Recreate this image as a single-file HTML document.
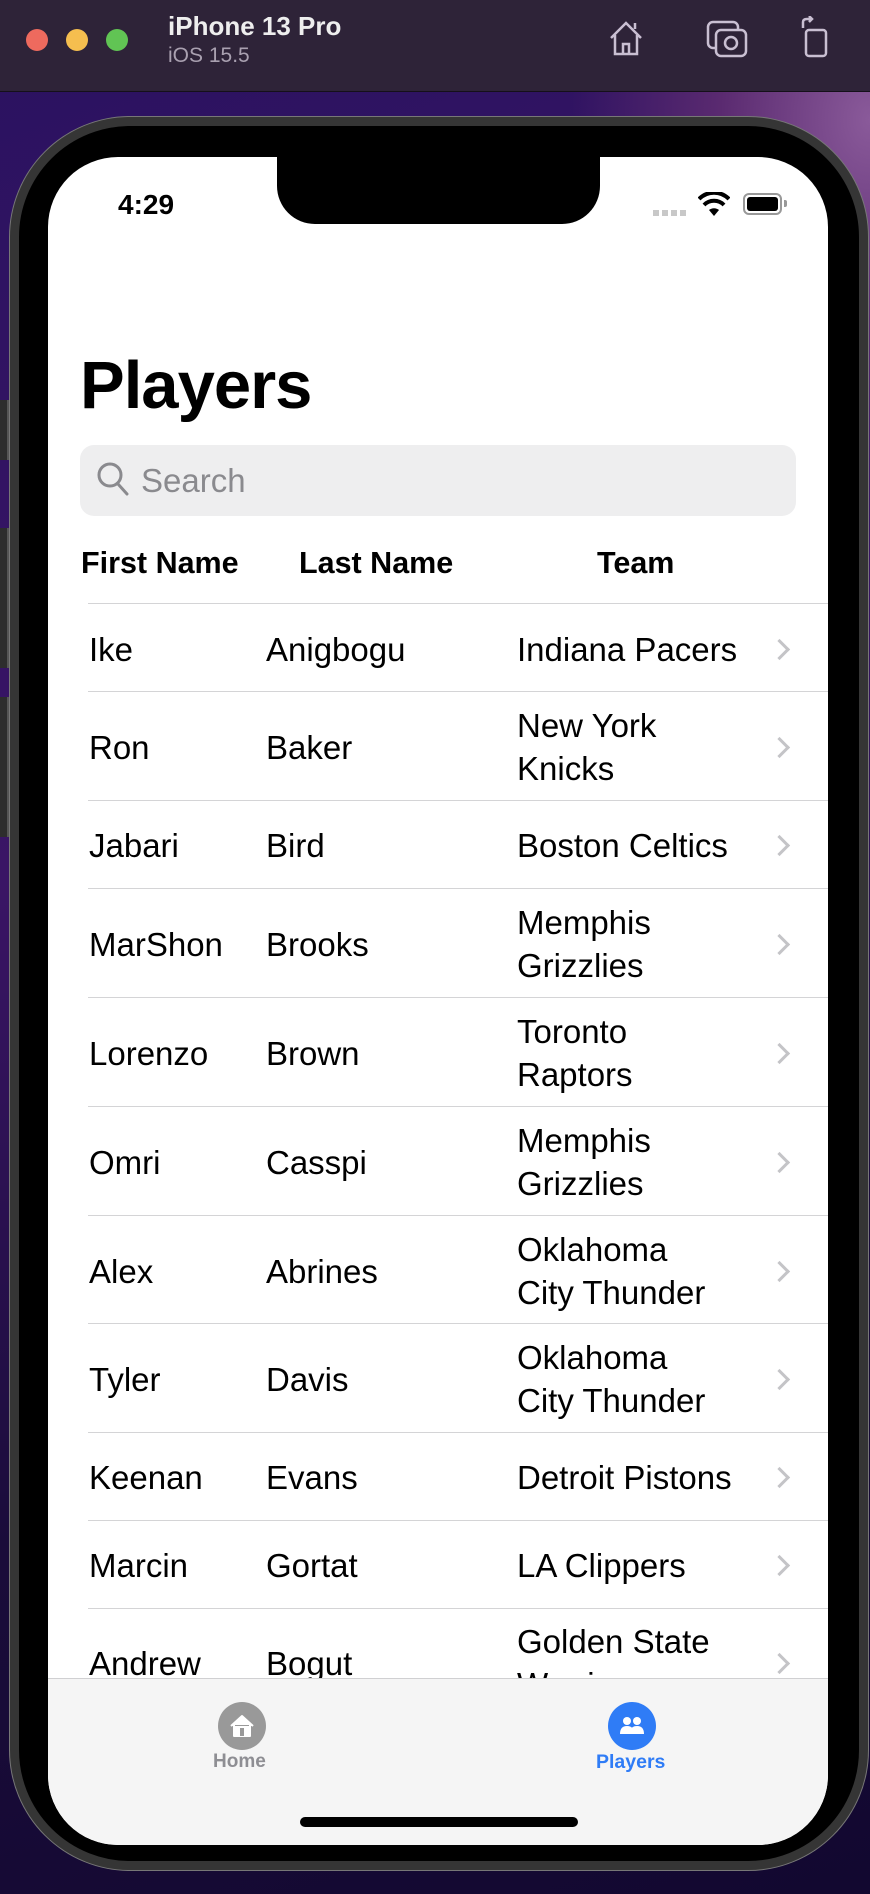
<!DOCTYPE html>
<html><head><meta charset="utf-8"><style>
*{margin:0;padding:0;box-sizing:border-box}
body{width:870px;height:1894px;overflow:hidden;position:relative;font-family:"Liberation Sans",Arial,sans-serif;background:radial-gradient(ellipse 300px 400px at 870px 120px,#8a5a9a 0%,#5a2a70 50%,transparent 100%),linear-gradient(160deg,#2a1260 0%,#3a1565 40%,#1a0c3a 70%,#120830 100%)}
.abs{position:absolute}
.tb{left:0;top:0;width:870px;height:92px;background:#2e2338;border-bottom:1px solid #15101a}
.dot{width:22px;height:22px;border-radius:50%;top:29px}
.frame{left:10px;top:117px;width:858px;height:1753px;border-radius:120px;background:#000;border:9px solid #353535;box-shadow:0 0 0 1px #777}
.screen{left:48px;top:157px;width:780px;height:1688px;border-radius:70px;background:#fff;overflow:hidden}
.notch{left:229px;top:-10px;width:323px;height:77px;background:#000;border-radius:0 0 38px 38px}
.t{position:absolute;font-size:33px;color:#000;white-space:nowrap;line-height:43px}
.sep{position:absolute;left:40px;right:0;height:1px;background:#d4d4d6}
.chev{position:absolute;left:724px;width:15px;height:15px;border-right:3px solid #c4c4c7;border-top:3px solid #c4c4c7;transform:rotate(45deg)}
.btn{left:0;width:9px;background:#2d2d2d;border-right:2px solid #555}
</style></head><body>
<div class="abs tb">
 <div class="abs dot" style="left:26px;background:#ee6a5e"></div>
 <div class="abs dot" style="left:66px;background:#f5be4f"></div>
 <div class="abs dot" style="left:106px;background:#61c454"></div>
 <div class="abs" style="left:168px;top:11px;color:#eee;font-weight:bold;font-size:26px">iPhone 13 Pro</div>
 <div class="abs" style="left:168px;top:44px;color:#a9a0b0;font-size:21px">iOS 15.5</div>
 <svg class="abs" style="left:608px;top:18px" width="36" height="40" viewBox="0 0 36 40" fill="none" stroke="#c9bfd2" stroke-width="2.5"><path d="M3 20 L18 5 L33 20 M7 17 V36 H29 V17 M15 36 V26 H21 V36 M27 11 V5"/></svg>
 <svg class="abs" style="left:706px;top:20px" width="42" height="38" viewBox="0 0 42 38" fill="none" stroke="#c9bfd2" stroke-width="2.5"><rect x="2" y="2" width="30" height="26" rx="5"/><rect x="10" y="10" width="30" height="26" rx="5" fill="#2e2338"/><circle cx="25" cy="23" r="6"/></svg>
 <svg class="abs" style="left:800px;top:16px" width="30" height="42" viewBox="0 0 30 42" fill="none" stroke="#c9bfd2" stroke-width="2.5"><rect x="6" y="14" width="20" height="26" rx="3"/><path d="M3 12 V6 Q3 3 7 3 H12 M9 0 L12 3 L9 6"/></svg>
</div>
<div class="abs btn" style="top:400px;height:60px"></div>
<div class="abs btn" style="top:528px;height:140px"></div>
<div class="abs btn" style="top:697px;height:140px"></div>
<div class="abs frame"></div>
<div class="abs screen">
 <div class="abs notch"></div>
 <div class="abs" style="left:70px;top:32px;font-size:28px;font-weight:bold">4:29</div>
 <div class="abs" style="left:605px;top:53px;width:33px;height:6px;background:repeating-linear-gradient(90deg,#c8c8c8 0 6px,transparent 6px 9px)"></div>
 <svg class="abs" style="left:650px;top:35px" width="32" height="24" viewBox="0 0 32 24"><path d="M16 24 L11 18 A8 8 0 0 1 21 18 Z" fill="#000"/><path d="M6 13 A14 14 0 0 1 26 13 M1 7 A21 21 0 0 1 31 7" stroke="#000" stroke-width="4" fill="none"/></svg>
 <div class="abs" style="left:695px;top:36px;width:39px;height:22px;border:2px solid #999;border-radius:6px;padding:2px"><div style="width:100%;height:100%;background:#000;border-radius:3px"></div></div>
 <div class="abs" style="left:736px;top:43px;width:3px;height:7px;background:#999;border-radius:0 2px 2px 0"></div>

 <div class="abs" style="left:32px;top:190px;font-size:67px;font-weight:bold;letter-spacing:-1px">Players</div>
 <div class="abs" style="left:32px;top:288px;width:716px;height:71px;background:#eeeeef;border-radius:14px"></div>
 <svg class="abs" style="left:48px;top:304px" width="34" height="36" viewBox="0 0 34 36" fill="none" stroke="#8a8a8e" stroke-width="3"><circle cx="14" cy="14" r="11"/><path d="M22 23 L31 33" stroke-linecap="round"/></svg>
 <div class="abs" style="left:93px;top:305px;font-size:33px;color:#8a8a8e">Search</div>
 <div class="abs" style="left:33px;top:389px;font-size:30.5px;font-weight:bold">First Name</div>
 <div class="abs" style="left:251px;top:389px;font-size:30.5px;font-weight:bold">Last Name</div>
 <div class="abs" style="left:549px;top:389px;font-size:30.5px;font-weight:bold">Team</div>

 <div class="sep" style="top:446px"></div>
 <div class="t" style="left:41px;top:471px">Ike</div><div class="t" style="left:218px;top:471px">Anigbogu</div><div class="t" style="left:469px;top:471px">Indiana Pacers</div><div class="chev" style="top:485px"></div>
 <div class="sep" style="top:534px"></div>
 <div class="t" style="left:41px;top:569px">Ron</div><div class="t" style="left:218px;top:569px">Baker</div><div class="t" style="left:469px;top:547px">New York<br>Knicks</div><div class="chev" style="top:583px"></div>
 <div class="sep" style="top:643px"></div>
 <div class="t" style="left:41px;top:667px">Jabari</div><div class="t" style="left:218px;top:667px">Bird</div><div class="t" style="left:469px;top:667px">Boston Celtics</div><div class="chev" style="top:681px"></div>
 <div class="sep" style="top:731px"></div>
 <div class="t" style="left:41px;top:766px">MarShon</div><div class="t" style="left:218px;top:766px">Brooks</div><div class="t" style="left:469px;top:744px">Memphis<br>Grizzlies</div><div class="chev" style="top:780px"></div>
 <div class="sep" style="top:840px"></div>
 <div class="t" style="left:41px;top:875px">Lorenzo</div><div class="t" style="left:218px;top:875px">Brown</div><div class="t" style="left:469px;top:853px">Toronto<br>Raptors</div><div class="chev" style="top:889px"></div>
 <div class="sep" style="top:949px"></div>
 <div class="t" style="left:41px;top:984px">Omri</div><div class="t" style="left:218px;top:984px">Casspi</div><div class="t" style="left:469px;top:962px">Memphis<br>Grizzlies</div><div class="chev" style="top:998px"></div>
 <div class="sep" style="top:1058px"></div>
 <div class="t" style="left:41px;top:1093px">Alex</div><div class="t" style="left:218px;top:1093px">Abrines</div><div class="t" style="left:469px;top:1071px">Oklahoma<br>City Thunder</div><div class="chev" style="top:1107px"></div>
 <div class="sep" style="top:1166px"></div>
 <div class="t" style="left:41px;top:1201px">Tyler</div><div class="t" style="left:218px;top:1201px">Davis</div><div class="t" style="left:469px;top:1179px">Oklahoma<br>City Thunder</div><div class="chev" style="top:1215px"></div>
 <div class="sep" style="top:1275px"></div>
 <div class="t" style="left:41px;top:1299px">Keenan</div><div class="t" style="left:218px;top:1299px">Evans</div><div class="t" style="left:469px;top:1299px">Detroit Pistons</div><div class="chev" style="top:1313px"></div>
 <div class="sep" style="top:1363px"></div>
 <div class="t" style="left:41px;top:1387px">Marcin</div><div class="t" style="left:218px;top:1387px">Gortat</div><div class="t" style="left:469px;top:1387px">LA Clippers</div><div class="chev" style="top:1401px"></div>
 <div class="sep" style="top:1451px"></div>
 <div class="t" style="left:41px;top:1485px">Andrew</div><div class="t" style="left:218px;top:1485px">Bogut</div><div class="t" style="left:469px;top:1463px">Golden State<br>Warriors</div><div class="chev" style="top:1499px"></div>

 <div class="abs" style="left:0;top:1521px;width:780px;height:167px;background:#f5f5f5;border-top:1.5px solid #d0d0d2"></div>
 <div class="abs" style="left:170px;top:1545px;width:48px;height:48px;border-radius:50%;background:#999"></div>
 <svg class="abs" style="left:178px;top:1553px" width="32" height="32" viewBox="0 0 32 32"><path d="M5 16 L16 6 L27 16 M8 14 V26 H24 V14 Z" fill="#fff" stroke="#fff" stroke-width="2" stroke-linejoin="round"/><rect x="14" y="18" width="4" height="8" fill="#999"/></svg>
 <div class="abs" style="left:165px;top:1594px;font-size:19px;color:#8e8e93;font-weight:bold">Home</div>
 <div class="abs" style="left:560px;top:1545px;width:48px;height:48px;border-radius:50%;background:#2f7cf6"></div>
 <svg class="abs" style="left:568px;top:1553px" width="32" height="32" viewBox="0 0 32 32" fill="#fff"><circle cx="11" cy="11" r="4"/><circle cx="21" cy="11" r="4"/><path d="M4 24 Q4 16 11 16 Q18 16 18 24 Z"/><path d="M14 24 Q14 16 21 16 Q28 16 28 24 Z"/></svg>
 <div class="abs" style="left:548px;top:1594px;font-size:19.5px;color:#2f7cf6;font-weight:bold">Players</div>
 <div class="abs" style="left:252px;top:1660px;width:278px;height:10px;border-radius:5px;background:#000"></div>
</div>
</body></html>
